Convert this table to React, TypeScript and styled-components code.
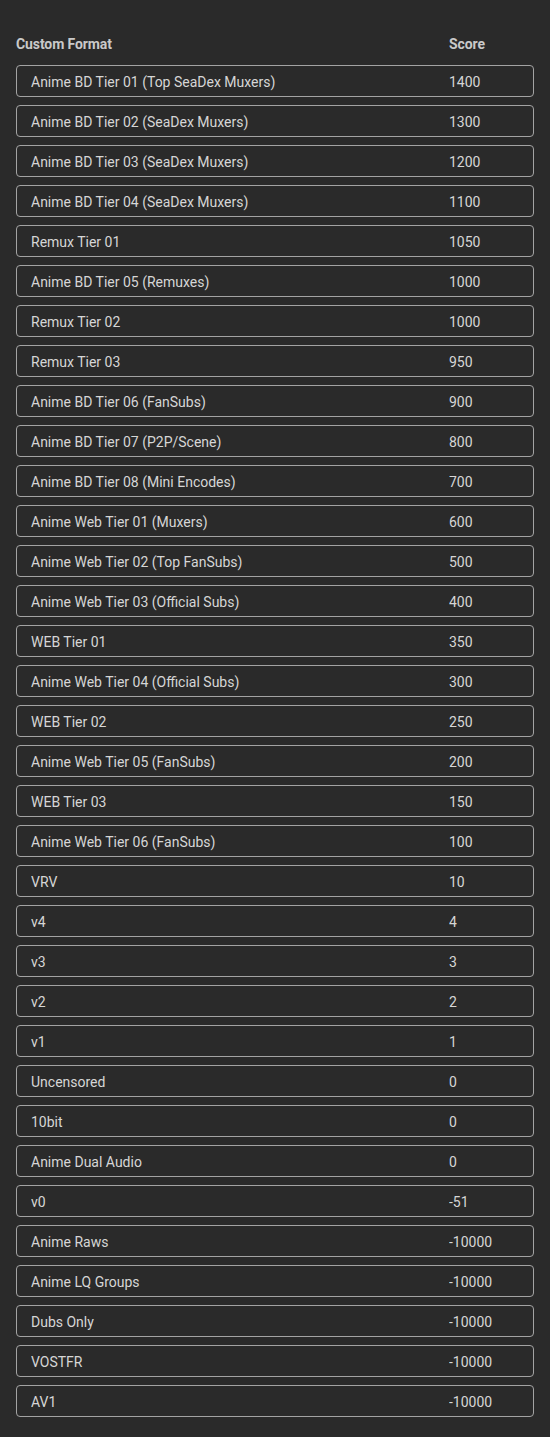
import React, { FC } from "react";
import styled, { createGlobalStyle } from "styled-components";

const GlobalStyle = createGlobalStyle`
  html, body {
    margin: 0;
    padding: 0;
    background: #2a2a2a;
  }
  body {
    font-family: Roboto, "Liberation Sans", sans-serif;
  }
`;

const Page = styled.div`
  padding: 34px 16px 20px;
  background: #2a2a2a;
  min-height: 1437px;
  box-sizing: border-box;
`;

const Header = styled.div`
  display: grid;
  grid-template-columns: 433px 1fr;
  height: 20px;
  line-height: 20px;
  margin-bottom: 11px;
  font-size: 14px;
  font-weight: bold;
  color: #c9c9c9;
  letter-spacing: -0.1px;
`;

const List = styled.div`
  display: flex;
  flex-direction: column;
  gap: 8px;
`;

const Row = styled.div`
  display: grid;
  grid-template-columns: 418px 1fr;
  height: 32px;
  box-sizing: border-box;
  border: 1px solid #a3a3a3;
  border-radius: 4px;
  padding: 1px 14px 0;
  line-height: 30px;
  font-size: 14px;
  color: #d6d6d6;
`;

const Cell = styled.span`
  white-space: nowrap;
  overflow: hidden;
`;

const formats: [string, number][] = [
  ["Anime BD Tier 01 (Top SeaDex Muxers)", 1400],
  ["Anime BD Tier 02 (SeaDex Muxers)", 1300],
  ["Anime BD Tier 03 (SeaDex Muxers)", 1200],
  ["Anime BD Tier 04 (SeaDex Muxers)", 1100],
  ["Remux Tier 01", 1050],
  ["Anime BD Tier 05 (Remuxes)", 1000],
  ["Remux Tier 02", 1000],
  ["Remux Tier 03", 950],
  ["Anime BD Tier 06 (FanSubs)", 900],
  ["Anime BD Tier 07 (P2P/Scene)", 800],
  ["Anime BD Tier 08 (Mini Encodes)", 700],
  ["Anime Web Tier 01 (Muxers)", 600],
  ["Anime Web Tier 02 (Top FanSubs)", 500],
  ["Anime Web Tier 03 (Official Subs)", 400],
  ["WEB Tier 01", 350],
  ["Anime Web Tier 04 (Official Subs)", 300],
  ["WEB Tier 02", 250],
  ["Anime Web Tier 05 (FanSubs)", 200],
  ["WEB Tier 03", 150],
  ["Anime Web Tier 06 (FanSubs)", 100],
  ["VRV", 10],
  ["v4", 4],
  ["v3", 3],
  ["v2", 2],
  ["v1", 1],
  ["Uncensored", 0],
  ["10bit", 0],
  ["Anime Dual Audio", 0],
  ["v0", -51],
  ["Anime Raws", -10000],
  ["Anime LQ Groups", -10000],
  ["Dubs Only", -10000],
  ["VOSTFR", -10000],
  ["AV1", -10000],
];

const App: FC = () => {
  return (
    <Page>
      <GlobalStyle />
      <Header>
        <span>Custom Format</span>
        <span>Score</span>
      </Header>
      <List>
        {formats.map(([name, score]) => (
          <Row key={name}>
            <Cell>{name}</Cell>
            <Cell>{score}</Cell>
          </Row>
        ))}
      </List>
    </Page>
  );
};

export default App;
